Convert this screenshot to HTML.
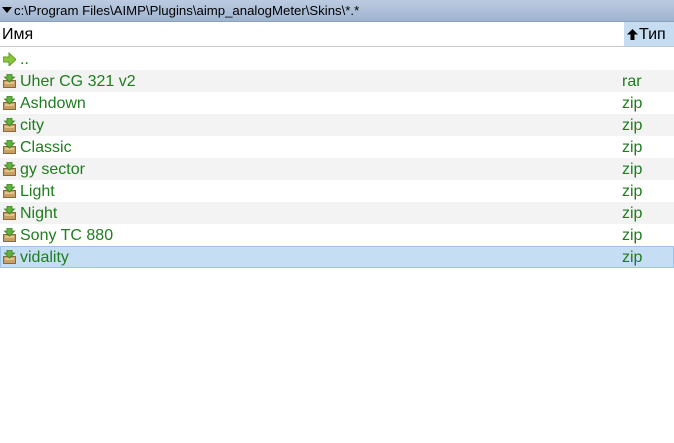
<!DOCTYPE html><html><head><style>
body{margin:0;width:674px;height:443px;background:#fff;font-family:"Liberation Sans","DejaVu Sans",sans-serif;overflow:hidden;position:relative}
.t{position:absolute;left:0;top:0;width:674px;height:21px;background:linear-gradient(#bccbe0,#9fb4d0);border-bottom:1px solid #8aa0bd;font-size:13.2px;line-height:22px;color:#000}
.t span{position:absolute;left:14px}
.h{position:absolute;left:0;top:22px;width:674px;height:24px;border-bottom:1px solid #c8c8c8;font-size:16px;line-height:26px}
.tip{position:absolute;left:624px;top:0;width:50px;height:24px;background:#c6dcf1}
.r{position:absolute;left:0;width:674px;height:22px;font-size:16px;line-height:24px;color:#1e7d1e}
.r .n{position:absolute;left:20px}.r .e{position:absolute;left:622px}
.g{background:#f3f3f3}
.s{background:#c6def4;outline:1px solid #9ec3e6;outline-offset:-1px}
.ic{position:absolute;left:3px;top:4px;width:13px;height:14px}
</style></head><body>
<div class="t"><svg style="position:absolute;left:2px;top:7px" width="10" height="7"><path d="M0 0H10L5 6Z" fill="#000"/></svg><span>c:\Program Files\AIMP\Plugins\aimp_analogMeter\Skins\*.*</span></div>
<div class="h"><span style="position:absolute;left:2px">Имя</span><div class="tip"><svg style="position:absolute;left:3px;top:7px" width="11" height="11"><path d="M5.5 0L11 5.5H7.5V11H3.5V5.5H0Z" fill="#000"/></svg><span style="position:absolute;left:15px">Тип</span></div></div>
<div class="r" style="top:48px"><svg class="ic" viewBox="0 0 13 14"><path d="M0 5H6V1L13 7.5L6 14V10H0Z" fill="#8cc63e" stroke="#5e9e22" stroke-width="1"/></svg><span class="n" style="color:#1e7d1e">..</span></div>
<div id="rows"></div>
<script>
var d=[["Uher CG 321 v2","rar"],["Ashdown","zip"],["city","zip"],["Classic","zip"],["gy sector","zip"],["Light","zip"],["Night","zip"],["Sony TC 880","zip"],["vidality","zip"]];
var h="";d.forEach(function(x,i){var c=i==8?"s":(i%2==0?"g":"");h+='<div class="r '+c+'" style="top:'+(70+22*i)+'px"><svg class="ic" viewBox="0 0 13 14"><rect x="0.5" y="6.5" width="12" height="7" fill="#c9a063" stroke="#8a6a3a"/><rect x="2" y="8" width="9" height="2" fill="#e3c48e"/><path d="M4 0H9V3H11.5L6.5 8L1.5 3H4Z" fill="#5fb33a" stroke="#3a7d22" stroke-width="0.8"/></svg><span class="n">'+x[0]+'</span><span class="e">'+x[1]+'</span></div>'});
document.getElementById("rows").innerHTML=h;
</script>
</body></html>
